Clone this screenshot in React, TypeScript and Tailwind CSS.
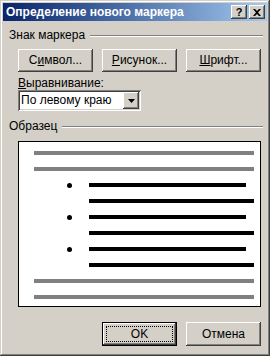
import React from 'react'

const raised =
  'bg-[#d4d0c8] shadow-[inset_-1px_-1px_#404040,inset_1px_1px_#ffffff,inset_-2px_-2px_#808080,inset_2px_2px_#d4d0c8]'

function Btn({ children, width = 'w-[75px]' }: { children: React.ReactNode; width?: string }) {
  return (
    <div className={`${width} h-[23px] ${raised} flex items-center justify-center text-[12px] text-black`}>
      {children}
    </div>
  )
}

function Etched() {
  return <div className="flex-1 h-[2px] border-t border-t-[#808080] border-b border-b-white" />
}

function Bar({ w, color = 'bg-black' }: { w: string; color?: string }) {
  return <div className={`h-[4px] ${w} ${color}`} />
}

function BulletRow({ short }: { short?: boolean }) {
  return (
    <div className="flex items-center h-[4px]">
      <div className="w-[55px] flex justify-start pl-[33px]">
        {short && <div className="w-[5px] h-[5px] rounded-full bg-black" />}
      </div>
      <Bar w={short ? 'w-[157px]' : 'w-[165px]'} />
    </div>
  )
}

export default function App() {
  return (
    <div
      className="w-[270px] h-[356px] bg-[#d4d0c8] p-[3px] flex flex-col shadow-[inset_-1px_-1px_#404040,inset_1px_1px_#d4d0c8,inset_-2px_-2px_#808080,inset_2px_2px_#ffffff]"
      style={{ fontFamily: '"Liberation Sans", Arial, sans-serif' }}
    >
      <div className="h-[18px] bg-gradient-to-r from-[#0a246a] to-[#a6caf0] flex items-center pl-[3px] pr-[2px]">
        <span className="text-white font-bold text-[12px] leading-none flex-1">Определение нового маркера</span>
        <div className={`w-[16px] h-[14px] ${raised} flex items-center justify-center text-[11px] font-bold leading-none text-black`}>
          ?
        </div>
        <div className={`ml-[2px] w-[16px] h-[14px] ${raised} flex items-center justify-center`}>
          <svg width="8" height="7" viewBox="0 0 8 7">
            <path d="M0 0h2l2 2 2-2h2L5 3.5 8 7H6L4 5 2 7H0l3-3.5z" fill="#000" />
          </svg>
        </div>
      </div>

      <div className="flex flex-col pl-[6px] pr-[4px] text-[12px] text-black leading-[13px]">
        <div className="mt-[8px] h-[13px] flex items-center">
          <span>Знак маркера</span>
          <div className="ml-[5px] flex-1 flex">
            <Etched />
          </div>
        </div>

        <div className="mt-[7px] pl-[9px] flex gap-[9px]">
          <Btn>
            <span>
              С<u>и</u>мвол...
            </span>
          </Btn>
          <Btn>
            <span>
              <u>Р</u>исунок...
            </span>
          </Btn>
          <Btn>
            <span>
              <u>Ш</u>рифт...
            </span>
          </Btn>
        </div>

        <div className="mt-[5px] pl-[9px] h-[13px]">
          <u>В</u>ыравнивание:
        </div>

        <div className="ml-[9px] w-[123px] h-[21px] bg-white flex items-center p-[2px] shadow-[inset_1px_1px_#808080,inset_-1px_-1px_#ffffff,inset_2px_2px_#404040,inset_-2px_-2px_#d4d0c8]">
          <span className="flex-1 pl-[1px]">По левому краю</span>
          <div className={`w-[16px] h-[17px] ${raised} flex items-center justify-center`}>
            <svg width="7" height="4" viewBox="0 0 7 4">
              <path d="M0 0h7L3.5 4z" fill="#000" />
            </svg>
          </div>
        </div>

        <div className="mt-[9px] h-[13px] flex items-center">
          <span>Образец</span>
          <div className="ml-[5px] flex-1 flex">
            <Etched />
          </div>
        </div>

        <div className="mt-[8px] ml-[9px] w-[243px] h-[166px] bg-white border border-black pt-[9px] pl-[15px] flex flex-col gap-[12px]">
          <Bar w="w-[220px]" color="bg-[#808080]" />
          <Bar w="w-[220px]" color="bg-[#808080]" />
          <BulletRow short />
          <BulletRow />
          <BulletRow short />
          <BulletRow />
          <BulletRow short />
          <BulletRow />
          <Bar w="w-[220px]" color="bg-[#808080]" />
          <Bar w="w-[220px]" color="bg-[#808080]" />
        </div>

        <div className="mt-[15px] flex justify-end gap-[9px] pr-[2px]">
          <div className="w-[75px] h-[24px] border border-black">
            <div className={`w-full h-full ${raised} flex items-center justify-center p-[3px]`}>
              <div className="w-full h-full border border-dotted border-black flex items-center justify-center">
                OK
              </div>
            </div>
          </div>
          <Btn width="w-[75px] !h-[24px]">Отмена</Btn>
        </div>
      </div>
    </div>
  )
}
